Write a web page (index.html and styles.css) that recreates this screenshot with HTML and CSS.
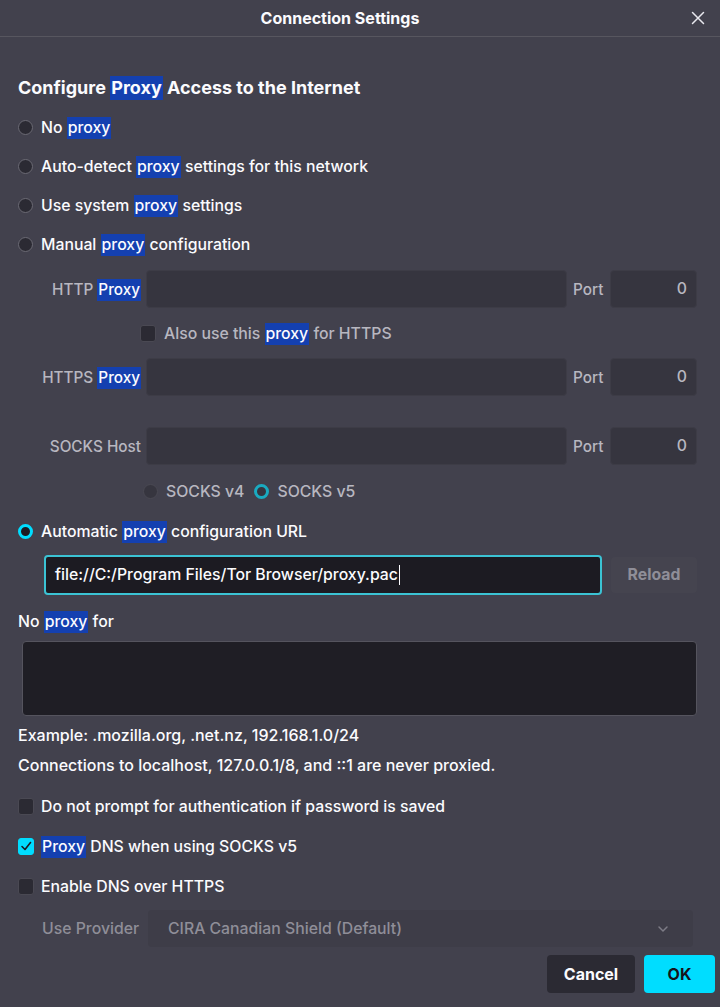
FILE: index.html
```html
<!DOCTYPE html>
<html lang="en">
<head>
<meta charset="utf-8">
<title>Connection Settings</title>
<link rel="stylesheet" href="styles.css">
</head>
<body>
<div class="dialog">
  <header class="titlebar">
    <div class="title">Connection Settings</div>
    <div class="close" aria-label="Close">
      <svg width="14" height="14" viewBox="0 0 14 14"><path d="M1.5 1.5 L12.5 12.5 M12.5 1.5 L1.5 12.5" stroke="#e8e8ee" stroke-width="1.5" stroke-linecap="round" fill="none"/></svg>
    </div>
  </header>

  <main class="content">
    <h1 class="heading">Configure <mark class="hl">Proxy</mark> Access to the Internet</h1>

    <div class="radios">
      <label class="opt"><span class="radio"></span><span>No <mark class="hl">proxy</mark></span></label>
      <label class="opt"><span class="radio"></span><span>Auto-detect <mark class="hl">proxy</mark> settings for this network</span></label>
      <label class="opt"><span class="radio"></span><span>Use system <mark class="hl">proxy</mark> settings</span></label>
      <label class="opt"><span class="radio"></span><span>Manual <mark class="hl">proxy</mark> configuration</span></label>
    </div>

    <div class="manual">
      <div class="hostrow">
        <span class="hlabel">HTTP <mark class="hl">Proxy</mark></span>
        <span class="field"></span>
        <span class="plabel">Port</span>
        <span class="field port">0</span>
      </div>
      <div class="subcheck">
        <span class="check"></span><span>Also use this <mark class="hl">proxy</mark> for HTTPS</span>
      </div>
      <div class="hostrow">
        <span class="hlabel">HTTPS <mark class="hl">Proxy</mark></span>
        <span class="field"></span>
        <span class="plabel">Port</span>
        <span class="field port">0</span>
      </div>
      <div class="spacer"></div>
      <div class="hostrow">
        <span class="hlabel">SOCKS Host</span>
        <span class="field"></span>
        <span class="plabel">Port</span>
        <span class="field port">0</span>
      </div>
      <div class="socksver">
        <span class="radio small"></span><span class="vlabel">SOCKS v4</span>
        <span class="radio small on"></span><span class="vlabel">SOCKS v5</span>
      </div>
    </div>

    <label class="opt auto"><span class="radio on"></span><span>Automatic <mark class="hl">proxy</mark> configuration URL</span></label>
    <div class="urlrow">
      <div class="urlinput">file://C:/Program Files/Tor Browser/proxy.pac<span class="caret"></span></div>
      <div class="reload">Reload</div>
    </div>

    <div class="noproxy">No <mark class="hl">proxy</mark> for</div>
    <div class="textarea"></div>

    <p class="note">Example: .mozilla.org, .net.nz, 192.168.1.0/24</p>
    <p class="note">Connections to localhost, 127.0.0.1/8, and ::1 are never proxied.</p>

    <div class="checks">
      <label class="crow"><span class="check"></span><span>Do not prompt for authentication if password is saved</span></label>
      <label class="crow"><span class="check on"><svg width="12" height="12" viewBox="0 0 12 12"><path d="M2 6.5 L5 9.5 L10.5 2.5" stroke="#1c1b22" stroke-width="1.6" fill="none" stroke-linecap="round" stroke-linejoin="round"/></svg></span><span><mark class="hl">Proxy</mark> DNS when using SOCKS v5</span></label>
      <label class="crow"><span class="check"></span><span>Enable DNS over HTTPS</span></label>
    </div>

    <div class="provider">
      <span class="plabel2">Use Provider</span>
      <div class="select">
        <span>CIRA Canadian Shield (Default)</span>
        <svg width="12" height="8" viewBox="0 0 12 8"><path d="M2 2 L6 6 L10 2" stroke="#7d7c86" stroke-width="1.5" fill="none" stroke-linecap="round"/></svg>
      </div>
    </div>
  </main>

  <footer class="buttons">
    <button class="btn cancel">Cancel</button>
    <button class="btn ok">OK</button>
  </footer>
</div>
</body>
</html>
```

FILE: styles.css
```css
* { box-sizing: border-box; }
html, body {
  margin: 0;
  padding: 0;
  background: #42414d;
}
body {
  font-family: "Inter", "Noto Sans", sans-serif;
  font-size: 15.8px;
  font-weight: 500;
  color: #fbfbfe;
  width: 720px;
  height: 1007px;
  overflow: hidden;
}
.dialog { width: 720px; }

.titlebar {
  display: flex;
  align-items: center;
  height: 37px;
  border-bottom: 1px solid #57565f;
}
.title {
  flex: 1;
  text-align: center;
  font-weight: 700;
  font-size: 16px;
}
.close {
  width: 40px;
  display: flex;
  justify-content: center;
  align-items: center;
  padding-right: 4px;
}

.content {
  padding: 0 23px 0 18px;
}
.heading {
  margin: 39px 0 0;
  font-size: 18px;
  font-weight: 700;
  line-height: 24px;
}
.hl {
  background: #1440b0;
  color: #fbfbfe;
  padding: 1px 1px 2px;
}

.radios { margin-top: 8px; }
.opt {
  display: flex;
  align-items: center;
  height: 39px;
  gap: 8px;
}
.radio {
  width: 15px;
  height: 15px;
  border-radius: 50%;
  background: #2b2a33;
  border: 1px solid #6b6a74;
  flex: none;
}
.radio.on {
  background: #1c1b22;
  border: 3px solid #00ddff;
}

.manual { margin-top: 6px; color: #b8b7c0; }
.hostrow {
  display: flex;
  align-items: center;
  height: 38px;
}
.hlabel {
  width: 123px;
  text-align: right;
  margin-right: 5px;
  font-size: 15.3px;
}
.field {
  flex: 1;
  height: 38px;
  background: #36353f;
  border: 1px solid #3d3c46;
  border-radius: 4px;
}
.field.port {
  flex: none;
  width: 87px;
  text-align: right;
  padding-right: 9px;
  line-height: 36px;
}
.plabel {
  width: 32px;
  margin: 0 5px 0 6px;
  font-size: 15.3px;
}
.subcheck {
  display: flex;
  align-items: center;
  height: 50px;
  padding-left: 122px;
  gap: 8px;
}
.check {
  width: 16px;
  height: 17px;
  border-radius: 3px;
  background: #2b2a33;
  border: 1px solid #4a4953;
  flex: none;
  display: flex;
  align-items: center;
  justify-content: center;
}
.check.on {
  background: #00ddff;
  border-color: #00ddff;
}
.spacer { height: 31px; }
.socksver {
  display: flex;
  align-items: center;
  height: 52px;
  padding-left: 125px;
}
.radio.small { border-color: #4a4953; background: #36353f; }
.radio.small.on { background: #36353f; border: 3px solid #1aaac0; }
.vlabel { margin: 0 10px 0 8px; }

.auto { height: 28px; }
.urlrow {
  display: flex;
  align-items: center;
  margin-top: 10px;
  padding-left: 26px;
  gap: 9px;
}
.urlinput {
  flex: 1;
  height: 40px;
  background: #1c1b22;
  border: 2px solid #3bc3d4;
  border-radius: 4px;
  padding-left: 9px;
  line-height: 36px;
  display: flex;
  align-items: center;
}
.caret {
  display: inline-block;
  width: 1px;
  height: 20px;
  background: #fbfbfe;
  margin-left: 1px;
}
.reload {
  width: 86px;
  height: 36px;
  background: #45444f;
  border-radius: 4px;
  color: #8f8e98;
  font-weight: 700;
  text-align: center;
  line-height: 36px;
}

.noproxy {
  margin-top: 17px;
  line-height: 20px;
}
.textarea {
  margin: 9px 0 0 4px;
  height: 75px;
  background: #1f1e25;
  border: 1px solid #55545e;
  border-radius: 4px;
}
.note {
  margin: 0;
  line-height: 30px;
  font-size: 16px;
}
.note:first-of-type { margin-top: 4px; }

.checks { margin-top: 6px; }
.crow {
  display: flex;
  align-items: center;
  height: 40px;
  gap: 7px;
}

.provider {
  display: flex;
  align-items: center;
  margin-top: 4px;
  padding-left: 24px;
  color: #8f8e98;
}
.plabel2 { width: 106px; }
.select {
  flex: 1;
  height: 37px;
  margin-right: 4px;
  background: #3e3d48;
  border-radius: 4px;
  display: flex;
  align-items: center;
  justify-content: space-between;
  padding: 0 24px 0 20px;
}

.buttons {
  display: flex;
  justify-content: flex-end;
  gap: 9px;
  padding: 0 5px;
  margin-top: 8px;
}
.btn {
  height: 38px;
  border: none;
  border-radius: 4px;
  font-family: inherit;
  font-size: 16px;
  font-weight: 700;
}
.cancel {
  width: 88px;
  background: #2b2a33;
  color: #fbfbfe;
}
.ok {
  width: 71px;
  background: #00ddff;
  color: #15141a;
}
```
